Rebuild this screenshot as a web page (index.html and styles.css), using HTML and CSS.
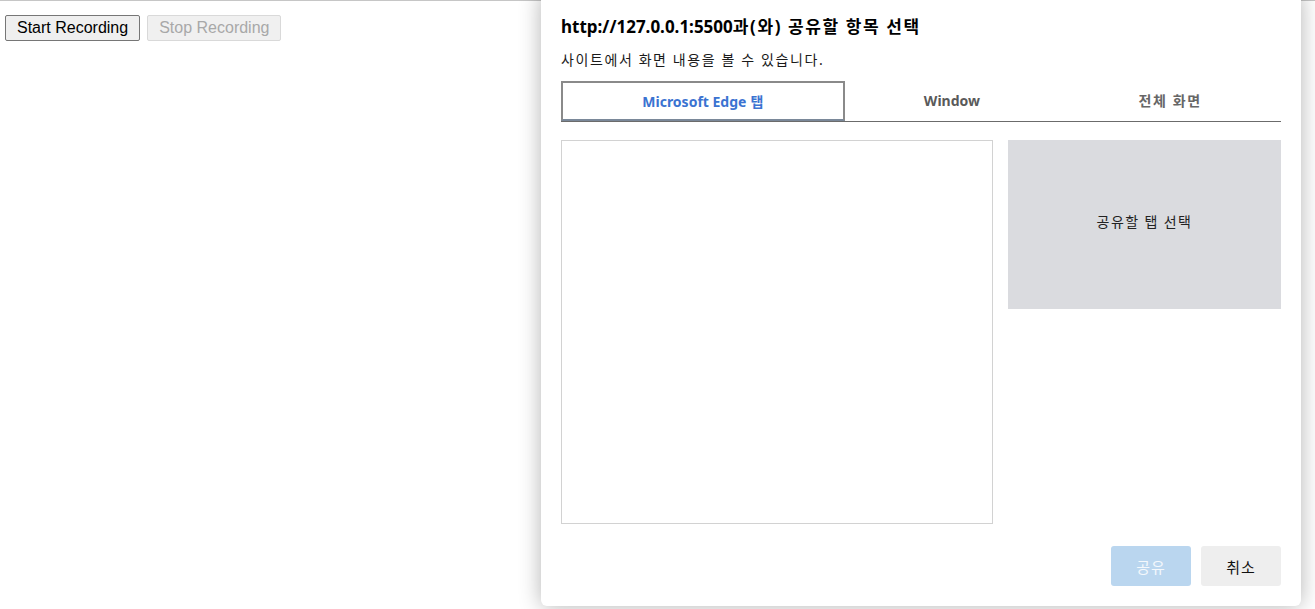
FILE: index.html
```html
<!DOCTYPE html>
<html lang="ko">
<head>
<meta charset="utf-8">
<title>Screen share</title>
<link rel="stylesheet" href="styles.css">
</head>
<body>
<div class="page">
  <div class="controls">
    <button class="btn">Start Recording</button>
    <button class="btn" disabled>Stop Recording</button>
  </div>
</div>
<div class="dialog">
  <h1 class="title">http://127.0.0.1:5500<span class="ko">과(와) 공유할 항목 선택</span></h1>
  <p class="subtitle">사이트에서 화면 내용을 볼 수 있습니다.</p>
  <div class="tabs">
    <div class="tab active">Microsoft Edge <span class="ko">탭</span></div>
    <div class="tab">Window</div>
    <div class="tab light ko">전체 화면</div>
  </div>
  <div class="body">
    <div class="list"></div>
    <div class="preview">공유할 탭 선택</div>
  </div>
  <div class="footer">
    <button class="action share" disabled>공유</button>
    <button class="action cancel">취소</button>
  </div>
</div>
</body>
</html>
```
FILE: styles.css
```css
html, body {
  margin: 0;
  padding: 0;
  height: 100%;
  overflow: hidden;
  background: #fff;
}
body {
  border-top: 1px solid #c6c6c6;
  box-sizing: border-box;
}
.page {
  padding: 14px 5px;
}
.controls {
  display: flex;
  gap: 7px;
}
.btn {
  font-family: "Liberation Sans", Arial, sans-serif;
  font-size: 16px;
  line-height: 18px;
  height: 26px;
  padding: 3px 11px;
  margin: 0;
  border: 1px solid #767676;
  border-radius: 2px;
  background: #efefef;
  color: #000;
}
.btn:disabled {
  border-color: #d9d9d9;
  background: #f0f0f0;
  color: #a8a8a8;
}
.dialog {
  position: absolute;
  top: -8px;
  left: 541px;
  width: 760px;
  height: 614px;
  box-sizing: border-box;
  padding: 23px 20px 20px;
  background: #fff;
  border-radius: 6px;
  box-shadow: 0 0 22px rgba(0, 0, 0, 0.3);
  display: flex;
  flex-direction: column;
  font-family: "Noto Sans", "Noto Sans CJK KR", sans-serif;
}
.title {
  margin: 0;
  font-size: 17px;
  line-height: 23px;
  font-weight: 700;
  color: #000;
}
.title .ko {
  letter-spacing: 1.6px;
}
.subtitle {
  margin: 12px 0 0;
  font-size: 14px;
  line-height: 20px;
  color: #1a1a1a;
  letter-spacing: 1.6px;
}
.tabs {
  margin-top: 11px;
  display: flex;
  height: 40px;
  border-bottom: 1px solid #6b6b6b;
}
.tab {
  flex: 1 1 auto;
  display: flex;
  align-items: center;
  justify-content: center;
  font-size: 14px;
  font-weight: 700;
  color: #5a5a5a;
  box-sizing: border-box;
  padding-bottom: 2px;
}
.tab .ko {
  margin-left: 4px;
}
.tab.active {
  color: #3b73d1;
  border: 2px solid #8a8a8a;
  border-bottom-color: #7a8899;
  padding-bottom: 0;
}
.tab.light {
  font-weight: 600;
  color: #666;
  letter-spacing: 1.6px;
}
.body {
  margin-top: 18px;
  display: flex;
  gap: 15px;
  align-items: flex-start;
}
.list {
  width: 432px;
  height: 384px;
  box-sizing: border-box;
  border: 1px solid #d2d2d2;
}
.preview {
  flex: 1;
  height: 169px;
  box-sizing: border-box;
  padding-bottom: 8px;
  background: #dadbdf;
  display: flex;
  align-items: center;
  justify-content: center;
  font-size: 14px;
  color: #222;
  letter-spacing: 1.4px;
}
.footer {
  margin-top: auto;
  display: flex;
  justify-content: flex-end;
  gap: 10px;
}
.action {
  width: 80px;
  height: 40px;
  border: none;
  border-radius: 3px;
  font-family: "Noto Sans CJK KR", "Noto Sans", sans-serif;
  font-size: 15px;
  margin: 0;
  padding: 0;
  letter-spacing: 1px;
}
.share {
  background: #bad6ef;
  color: #f4f8fc;
}
.cancel {
  background: #eeeeee;
  color: #111;
}
```
